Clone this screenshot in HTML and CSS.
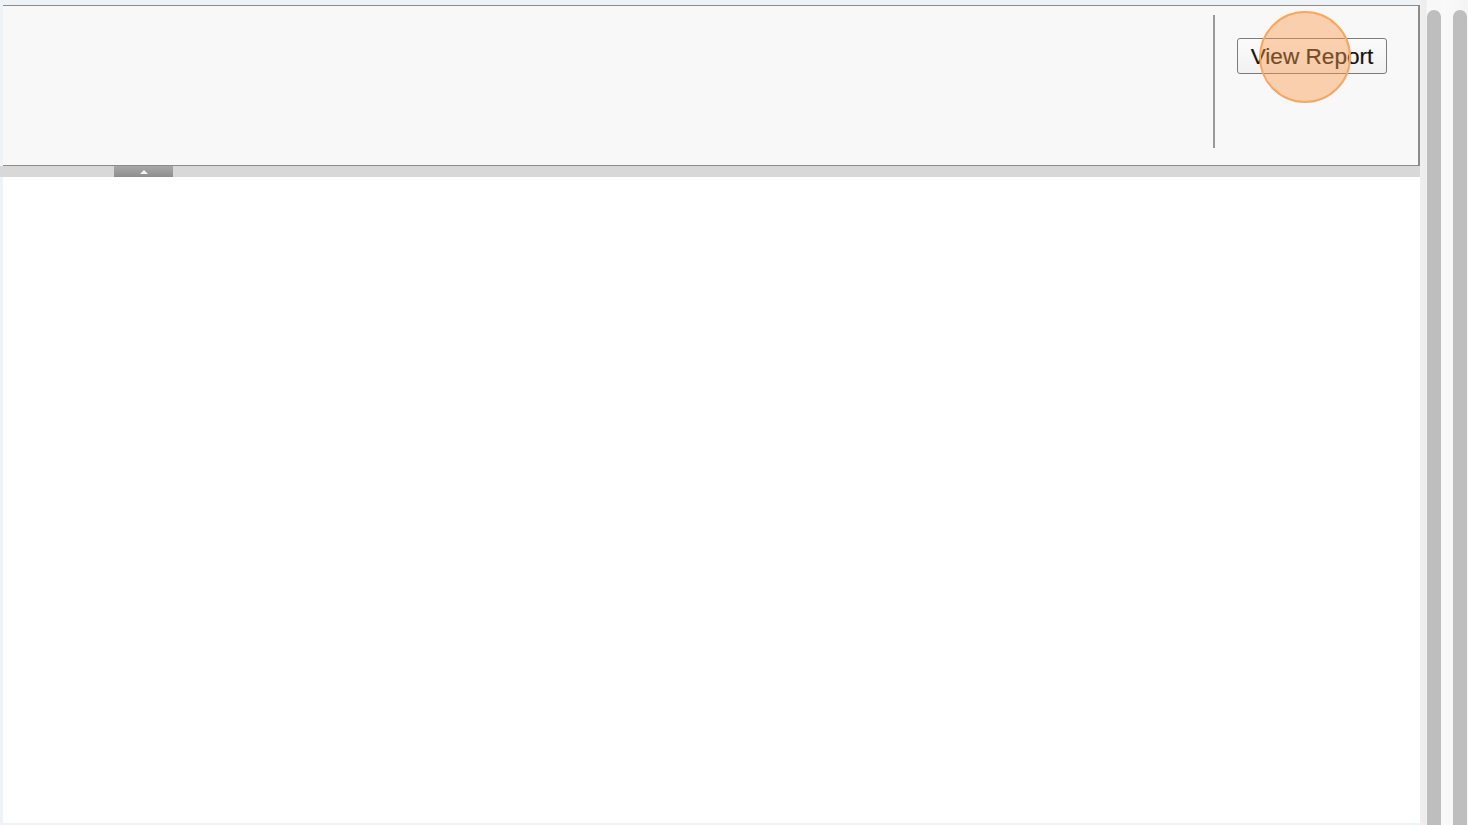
FILE: index.html
```html
<!DOCTYPE html>
<html>
<head>
<meta charset="utf-8">
<link rel="stylesheet" href="styles.css">
</head>
<body>
<div class="frame">
  <div class="main">
    <div class="panel">
      <div class="sep"></div>
      <div class="btn-wrap">
        <button class="btn">View Report</button>
        <div class="click"></div>
      </div>
    </div>
    <div class="splitter">
      <div class="handle"><span class="tri"></span></div>
    </div>
    <div class="content"></div>
  </div>
  <div class="scrolls">
    <div class="track t1"><div class="thumb"></div></div>
    <div class="track t2"><div class="thumb"></div></div>
  </div>
</div>
</body>
</html>
```

FILE: styles.css
```css
html, body {
  margin: 0;
  padding: 0;
  height: 100%;
}
body {
  background: #eef3f8;
  font-family: "Liberation Sans", Arial, sans-serif;
  overflow: hidden;
}
.frame {
  display: flex;
  height: 825px;
  box-sizing: border-box;
  padding: 5px 0 2px 3px;
}
.main {
  width: 1417px;
  display: flex;
  flex-direction: column;
}
.panel {
  height: 159px;
  background: #f8f8f8;
  border-top: 1px solid #8c8c8c;
  border-bottom: 1px solid #8c8c8c;
  border-right: 2px solid #8c8c8c;
  display: flex;
  justify-content: flex-end;
  align-items: flex-start;
  padding-right: 31px;
}
.sep {
  width: 2px;
  height: 133px;
  margin-top: 9px;
  background: #9a9a9a;
  margin-right: 22px;
}
.btn-wrap {
  position: relative;
  margin-top: 32px;
}
.btn {
  display: block;
  width: 150px;
  height: 36px;
  border: 1px solid #7c7c7c;
  border-radius: 3px;
  background: linear-gradient(#fbfbfb, #f1f1f1);
  font-family: "Liberation Sans", Arial, sans-serif;
  font-size: 22.6px;
  color: #141414;
  padding: 1px 0 0 0;
  text-align: center;
  -webkit-text-stroke: 0.2px #141414;
}
.click {
  position: absolute;
  left: 22px;
  top: -27px;
  width: 88px;
  height: 88px;
  border-radius: 50%;
  border: 2px solid #f6a862;
  background: rgba(250, 150, 70, 0.42);
}
.splitter {
  height: 11px;
  background: #d8d8d8;
  margin-left: -3px;
  padding-left: 114px;
  margin-right: -2px;
}
.handle {
  width: 59px;
  height: 11px;
  background: linear-gradient(#a8a8a8, #8e8e8e);
  display: flex;
  justify-content: center;
  align-items: center;
}
.tri {
  width: 0;
  height: 0;
  border-left: 4px solid transparent;
  border-right: 4px solid transparent;
  border-bottom: 4px solid #f4f4f4;
}
.content {
  flex: 1;
  background: #ffffff;
  margin-right: -2px;
}
.scrolls {
  flex: 1;
  display: flex;
  margin-top: -5px;
  margin-bottom: -2px;
  background: #f7f7f7;
}
.track {
  display: flex;
  padding-top: 10px;
}
.t1 {
  padding-left: 7px;
  width: 14px;
  background: linear-gradient(90deg, #f0f0f0, #ececec 6px, #f8f8f8 7px);
}
.t2 {
  padding-left: 12px;
  width: 14px;
  background: linear-gradient(90deg, #fafafa, #f5f5f5);
}
.thumb {
  width: 14px;
  background: #bebebe;
  border-radius: 7px 7px 0 0;
}
```
